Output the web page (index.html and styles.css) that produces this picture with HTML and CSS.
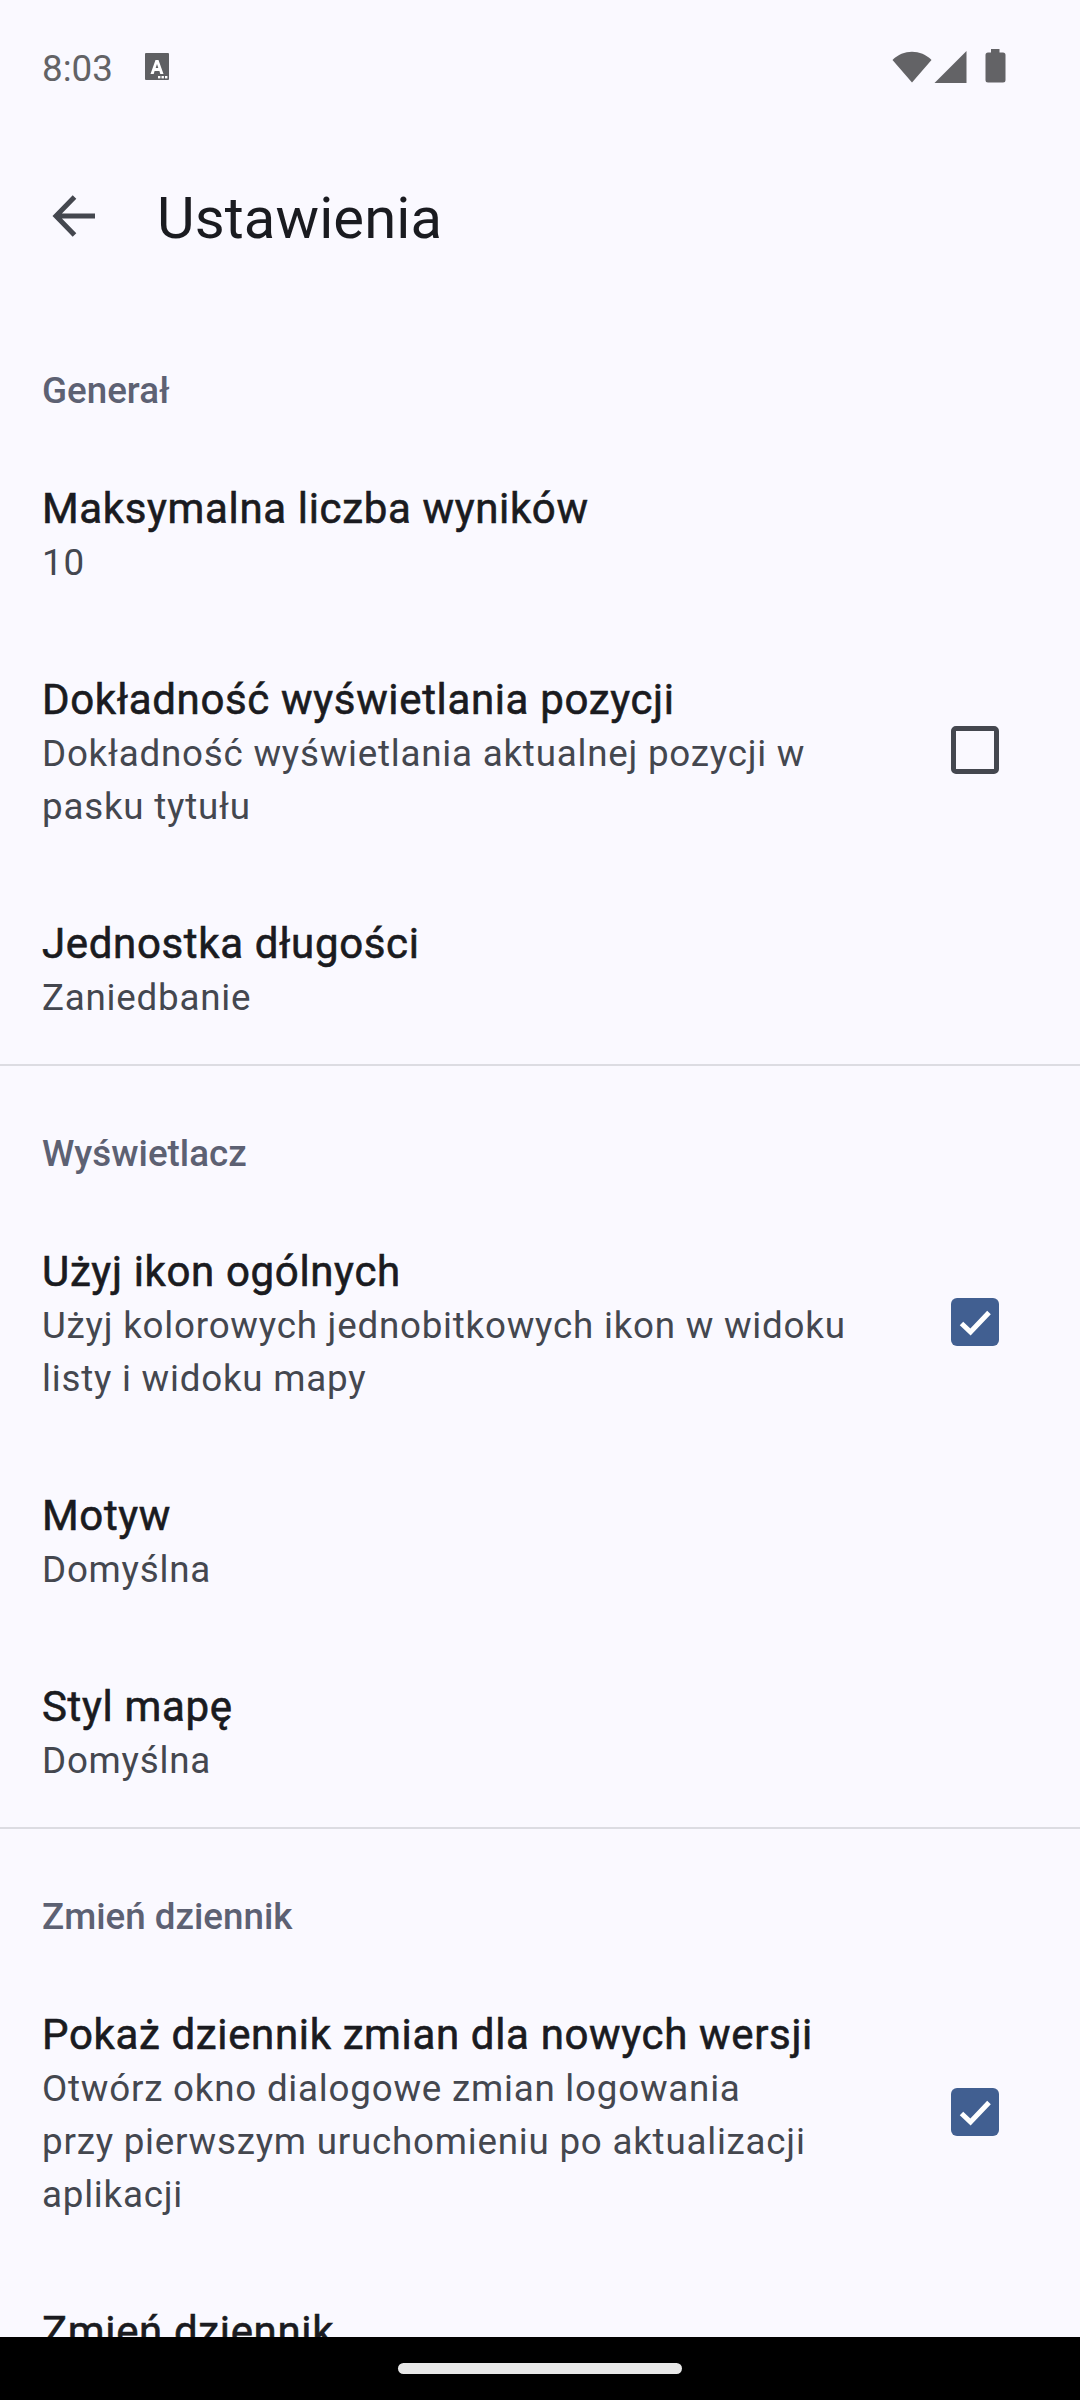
FILE: index.html
```html
<!DOCTYPE html>
<html lang="pl">
<head>
<meta charset="utf-8">
<title>Ustawienia</title>
<link rel="stylesheet" href="styles.css">
</head>
<body>
<div class="screen">
  <div class="statusbar">
    <span class="clock">8:03</span>
    <svg class="kb" width="24" height="27" viewBox="0 0 24 27"><rect width="24" height="27" rx="1" fill="#5f6063"/><path d="M5.500 21 L10.500 7 H13.500 L18.500 21 H15.300 L14.400 18 H9.600 L8.700 21 Z M10.700 15 H13.300 L12 11 Z" fill="#fff" fill-rule="evenodd"/><rect x="13" y="23" width="2.400" height="2.400" fill="#fff"/><rect x="16.500" y="23" width="2.400" height="2.400" fill="#fff"/><rect x="20" y="23" width="2.400" height="2.400" fill="#fff"/></svg>
    <span class="spacer"></span>
    <svg class="wifi" width="40" height="33" viewBox="0 0 40 33"><path d="M0.5 10 C11 -1 29 -1 39.5 10 L20 32.5 Z" fill="#636366"/></svg>
    <svg class="signal" width="33" height="33" viewBox="0 0 33 33"><path d="M32.5 1 V33 H0.5 Z" fill="#636366"/></svg>
    <svg class="battery" width="21" height="34" viewBox="0 0 21 34"><path d="M6 0 H14.500 V3.500 H18 Q20.500 3.500 20.500 6 V31 Q20.500 33.500 18 33.500 H3 Q0.500 33.500 0.500 31 V6 Q0.500 3.500 3 3.500 H6 Z" fill="#636366"/></svg>
  </div>
  <div class="appbar">
    <svg class="back" width="46" height="42" viewBox="0 0 46 42"><path d="M44 21 H5 M23.500 2 L5 21 L23.500 40" fill="none" stroke="#44474f" stroke-width="5"/></svg>
    <h1 class="title">Ustawienia</h1>
  </div>
  <main class="list">
    <section class="group first">
      <h2 class="group-title">Generał</h2>
      <div class="row"><div class="text"><div class="label">Maksymalna liczba wyników</div><div class="sub">10</div></div></div>
      <div class="row"><div class="text"><div class="label">Dokładność wyświetlania pozycji</div><div class="sub">Dokładność wyświetlania aktualnej pozycji w<br>pasku tytułu</div></div><span class="box"></span></div>
      <div class="row"><div class="text"><div class="label">Jednostka długości</div><div class="sub">Zaniedbanie</div></div></div>
    </section>
    <section class="group">
      <h2 class="group-title">Wyświetlacz</h2>
      <div class="row"><div class="text"><div class="label">Użyj ikon ogólnych</div><div class="sub">Użyj kolorowych jednobitkowych ikon w widoku<br>listy i widoku mapy</div></div><span class="box on"><svg width="48" height="48" viewBox="0 0 48 48"><path d="M10.500 25.500 L19.500 34 L38 14.500" fill="none" stroke="#fff" stroke-width="5"/></svg></span></div>
      <div class="row"><div class="text"><div class="label">Motyw</div><div class="sub">Domyślna</div></div></div>
      <div class="row"><div class="text"><div class="label">Styl mapę</div><div class="sub">Domyślna</div></div></div>
    </section>
    <section class="group last">
      <h2 class="group-title">Zmień dziennik</h2>
      <div class="row"><div class="text"><div class="label">Pokaż dziennik zmian dla nowych wersji</div><div class="sub">Otwórz okno dialogowe zmian logowania<br>przy pierwszym uruchomieniu po aktualizacji<br>aplikacji</div></div><span class="box on"><svg width="48" height="48" viewBox="0 0 48 48"><path d="M10.500 25.500 L19.500 34 L38 14.500" fill="none" stroke="#fff" stroke-width="5"/></svg></span></div>
      <div class="row"><div class="text"><div class="label">Zmień dziennik</div></div></div>
    </section>
  </main>
  <div class="navbar"><span class="pill"></span></div>
</div>
</body>
</html>
```
FILE: styles.css
```css
* { box-sizing: border-box; }
html, body { margin: 0; padding: 0; }
body { background: #faf9ff; font-family: Roboto, "Noto Sans", sans-serif; }
.screen { width: 1080px; height: 2400px; overflow: hidden; position: relative; background: #faf9ff; }
.statusbar { height: 132px; display: flex; align-items: center; padding: 0 74px 0 42px; }
.clock { font-size: 36.750px; color: #636366; line-height: 40px; width: 103px; padding-top: 5px; }
.spacer { flex: 1; }
.wifi { margin-right: 2px; }
.signal { margin-right: 18px; }
.appbar { height: 168px; display: flex; align-items: center; padding-left: 51px; }
.back { flex: none; margin-right: 60px; }
.title { margin: 0; font-size: 58px; font-weight: 400; color: #1a1b20; line-height: 70px; padding-top: 4px; letter-spacing: 0.1px; }
.list { display: block; }
.group { border-bottom: 2px solid #dcdce2; }
.group.first { padding-top: 3px; }
.group.last { border-bottom: none; }
.group-title { margin: 0; padding: 62px 42px 22px; font-size: 36.750px; font-weight: 500; color: #5d6173; line-height: 52px; }
.row { display: flex; align-items: center; padding: 43px 42px 41px 42px; }
.row:last-child { padding-bottom: 40px; }
.text { flex: 1; }
.label { font-size: 42px; font-weight: 400; -webkit-text-stroke: 0.6px #1a1b20; color: #1a1b20; line-height: 54px; letter-spacing: 0.65px; }
.sub { font-size: 36.750px; color: #44474f; letter-spacing: 0.77px; line-height: 53px; }
.box { flex: none; width: 48px; height: 48px; border: 5px solid #44474f; border-radius: 5px; margin-right: 39px; margin-top: -6px; }
.box.on { border: none; background: #415f91; border-radius: 6px; }
.box svg { display: block; }
.navbar { position: absolute; left: 0; right: 0; bottom: 0; height: 63px; background: #000; display: flex; justify-content: center; padding-top: 26px; }
.pill { width: 284px; height: 11px; border-radius: 6px; background: #e8e8e8; }
```
